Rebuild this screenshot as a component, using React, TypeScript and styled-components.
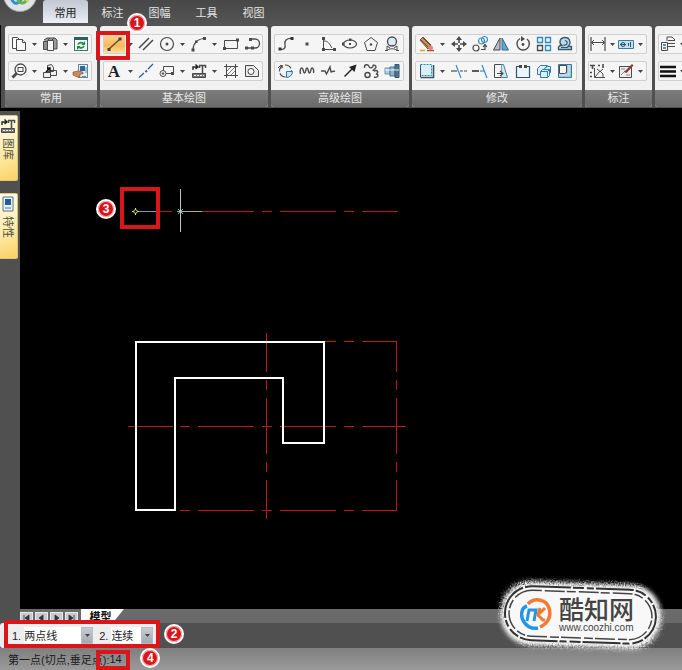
import React from "react";
import styled, { createGlobalStyle } from "styled-components";

const GlobalStyle = createGlobalStyle`
  * { box-sizing: border-box; }
  html, body, #root { height: 100%; margin: 0; }
  body { background: #505050; overflow: hidden; }
  body, button, input, select {
    font-family: "Liberation Sans", "Noto Sans CJK SC", sans-serif;
    font-size: 11px;
  }
  button { padding: 0; border: 0; background: none; color: inherit; }
`;

const Page = styled.div`
  position: relative;
  display: flex;
  flex-direction: column;
  min-height: 100vh;
  background: #505050;
`;

/* ---------- header ---------- */

const Header = styled.header`
  display: flex;
  align-items: flex-start;
  height: 25px;
  padding-left: 3px;
  background: linear-gradient(#474747, #555555);
`;

const AppButton = styled.button`
  width: 34px;
  height: 12px;
  margin-right: 6px;
  overflow: hidden;
  svg { display: block; margin-top: -22px; }
`;

const Tabs = styled.nav`
  display: flex;
  gap: 2px;
`;

const Tab = styled.button<{ $active?: boolean }>`
  width: 45px;
  height: 23px;
  border-radius: 3px 3px 0 0;
  color: ${(p) => (p.$active ? "#222222" : "#e4e4e4")};
  background: ${(p) =>
    p.$active ? "linear-gradient(#c3c8d2, #d9dde6 60%, #eef0f5)" : "none"};
`;

/* ---------- ribbon ---------- */

const Ribbon = styled.div`
  display: flex;
  gap: 3px;
  height: 84px;
  padding: 1px 0 1px 4px;
  border-left: 1px solid #0a0a0a;
  border-bottom: 1px solid #000000;
  background: #505050;
  overflow: hidden;
`;

const Group = styled.section<{ $width?: number }>`
  position: relative;
  display: flex;
  flex-direction: column;
  flex: ${(p) => (p.$width ? `0 0 ${p.$width}px` : "1 0 67px")};
  border-radius: 3px;
  background: #f1f1f1;
`;

const GroupBody = styled.div`
  display: flex;
  flex: 1;
  flex-direction: column;
  gap: 7px;
  padding: 8px 5px 0 3px;
`;

const ToolRow = styled.div`
  display: flex;
  align-items: center;
  height: 20px;
  border: 1px solid #cfcfcf;
  border-radius: 2px;
  background: #f5f5f5;
`;

const ToolButton = styled.button<{ $active?: boolean }>`
  display: flex;
  flex: 1 1 21px;
  align-items: center;
  justify-content: center;
  min-width: 0;
  height: 18px;
  background: ${(p) =>
    p.$active ? "linear-gradient(#fbd49a, #f9b858 60%, #fde3a0)" : "none"};
  svg { flex: none; overflow: visible; }
`;

const CaretButton = styled.button`
  display: flex;
  flex: 0 0 11px;
  align-items: center;
  justify-content: center;
  height: 18px;
`;

const GroupLabel = styled.h2`
  height: 17px;
  margin: 0;
  border-radius: 0 0 3px 3px;
  background: linear-gradient(#7d7d7d, #6a6a6a);
  color: #e9e9e9;
  font-size: 11px;
  font-weight: 400;
  line-height: 17px;
  text-align: center;
`;

/* ---------- workspace ---------- */

const Workspace = styled.div`
  display: flex;
  flex: 1;
  background: #000000;
`;

const Sidebar = styled.aside`
  display: flex;
  flex: 0 0 20px;
  flex-direction: column;
  gap: 12px;
  align-items: flex-start;
  padding-top: 4px;
  border-top: 2px solid #000000;
  background: #505050;
`;

const SideTab = styled.button`
  display: flex;
  flex-direction: column;
  align-items: center;
  gap: 4px;
  width: 18px;
  height: 66px;
  padding: 2px 2px 0 0;
  border: 1px solid #e0c57a;
  border-left: 0;
  border-radius: 0 2px 2px 0;
  background: linear-gradient(160deg, #fffbea, #fdeeb4 50%, #fbd262);
  color: #54503f;
`;

const SideLabel = styled.span`
  writing-mode: vertical-rl;
  text-orientation: sideways;
  line-height: 14px;
`;

const Drawing = styled.main`
  position: relative;
  display: flex;
  flex: 1;
  min-width: 0;
  svg.plan { width: 100%; height: auto; min-height: 420px; }
`;

/* ---------- bottom bars ---------- */

const SheetBar = styled.div`
  display: flex;
  gap: 3px;
  height: 14px;
  padding-left: 20px;
  background: linear-gradient(90deg, #505050 20px, #6a6a6a 20px);
  overflow: hidden;
`;

const SheetNav = styled.div`
  display: flex;
  gap: 2px;
  padding-top: 3px;
`;

const NavButton = styled.button`
  display: flex;
  align-items: center;
  justify-content: center;
  width: 13px;
  height: 12px;
  background: #c9c9c9;
  border: 1px solid #e9e9e9;
`;

const SheetTab = styled.button`
  width: 43px;
  height: 17px;
  padding-right: 4px;
  background: #ffffff;
  clip-path: polygon(0 0, 100% 0, 68% 100%, 0 100%);
  color: #111111;
  font-weight: 700;
  line-height: 15px;
`;

const OptionBar = styled.div`
  display: flex;
  height: 25px;
  background: #505050;
`;

const Options = styled.div`
  position: relative;
  display: flex;
  align-items: center;
  gap: 6px;
  width: 160px;
  padding-left: 12px;
  border-radius: 3px;
  background: #eeeeee;
`;

const Option = styled.label`
  position: relative;
  display: flex;
  align-items: center;
  gap: 3px;
  color: #222222;
`;

const Choice = styled.select<{ $width: number }>`
  width: ${(p) => p.$width}px;
  height: 17px;
  padding: 0;
  border: 0;
  appearance: none;
  background: #ffffff;
  color: #222222;
`;

const ChoiceArrow = styled.span`
  position: absolute;
  right: 0;
  display: flex;
  align-items: center;
  justify-content: center;
  width: 12px;
  height: 17px;
  border: 1px solid #b8bcc4;
  background: linear-gradient(#c9ccd3, #a3a7b0);
  pointer-events: none;
`;

const StatusBar = styled.footer`
  height: 22px;
  padding-left: 8px;
  background: linear-gradient(#7f7f7f, #9a9a9a);
`;

const Prompt = styled.label`
  display: flex;
  align-items: center;
  height: 22px;
  color: #1b1b1b;
`;

const PromptField = styled.span`
  position: relative;
  display: flex;
`;

const PromptInput = styled.input`
  width: 24px;
  padding: 0;
  border: 0;
  background: none;
  color: #1b1b1b;
`;

/* ---------- annotations lying over the window ---------- */

const Highlight = styled.span<{ $x: number; $y: number; $w: number; $h: number }>`
  position: absolute;
  z-index: 2;
  left: ${(p) => p.$x}px;
  top: ${(p) => p.$y}px;
  width: ${(p) => p.$w}px;
  height: ${(p) => p.$h}px;
  border: 4px solid #d9161b;
  pointer-events: none;
`;

const Step = styled.span<{ $x: number; $y: number }>`
  position: absolute;
  z-index: 3;
  left: ${(p) => p.$x}px;
  top: ${(p) => p.$y}px;
  width: 20px;
  height: 20px;
  border: 2px solid #ffffff;
  border-radius: 50%;
  background: #d9161b;
  box-shadow: inset 0 0 0 1px #f3b5b5;
  color: #ffffff;
  font-size: 12px;
  font-weight: 700;
  line-height: 16px;
  text-align: center;
`;

const Watermark = styled.div`
  position: absolute;
  right: 10px;
  bottom: 12px;
  z-index: 4;
  display: flex;
  align-items: center;
  gap: 6px;
  width: 180px;
  height: 84px;
  padding: 0 0 4px 28px;
`;

const WatermarkShape = styled.svg`
  position: absolute;
  inset: 0;
`;

const Brand = styled.div`
  position: relative;
  display: flex;
  flex-direction: column;
  color: #444444;
`;

const BrandName = styled.strong`
  font-family: "Noto Sans CJK SC", sans-serif;
  font-size: 25px;
  font-weight: 500;
  line-height: 28px;
`;

const BrandSite = styled.span`
  font-size: 10px;
  line-height: 12px;
`;

const BrandLogo = styled.svg`
  position: relative;
  flex: none;
`;

/* ---------- icons ---------- */

const D = "#4a4a4a";
const B = "#3b8fc4";
const L = "#cfe6f3";

const icons: Record<string, React.ReactNode> = {
  copy: (
    <g stroke={D} fill="#fafafa">
      <path d="M1.5 1.5h5l2 2v9h-7z" />
      <path d="M5.5 3.5h6l3 3v8h-9z" />
      <path d="M11.5 3.5v3h3" />
    </g>
  ),
  layers: (
    <g stroke={D}>
      <path d="M2 4l3-2h8l2 2v9h-3" fill="#9a9a9a" />
      <path d="M6 4l2-2M9 5l3-3" fill="none" />
      <path d="M1.5 5.500h4v8h-4z" fill="#8d8d8d" />
      <path d="M5.500 4.500h6v10h-6z" fill="#f6f6f6" />
    </g>
  ),
  refresh: (
    <g>
      <rect x="1.500" y="1.500" width="13" height="13" fill="#f3faf4" stroke="#47705d" />
      <path d="M1 1h14v3H1z" fill="#2c6058" />
      <path d="M5 8.500c1-2.500 4.500-2.500 5.500-.5M11 10c-1 2.500-4.500 2.500-5.500.5" fill="none" stroke="#198c45" strokeWidth="1.700" />
      <path d="M12 5v4H8.500zM4 14v-4h3.500z" fill="#198c45" />
    </g>
  ),
  zoom: (
    <g fill="none" stroke={D}>
      <path d="M6 10l-4.500 4.500" strokeWidth="2.800" />
      <circle cx="9.500" cy="6.500" r="5.500" fill="#f8f8f8" strokeWidth="1.300" />
      <rect x="7" y="4.500" width="5" height="4" />
    </g>
  ),
  block: (
    <g stroke={D} fill="#eeeeee">
      <path d="M5.500 2.500l4-1 2 3v4h-6zM8.500 7.500h6v5h-6zM1.500 9.500h7v5h-7z" />
      <path d="M4 9L8 5M5 5h3v3" fill="none" stroke="#111111" strokeWidth="1.500" />
    </g>
  ),
  props: (
    <g>
      <rect x="5.500" y="1.500" width="9" height="13" fill="#e8f1f8" stroke="#6686a0" />
      <path d="M7 3h5v5H7z" fill="#2b68a0" />
      <path d="M9 13.500h4M13 4v6" stroke="#6686a0" />
      <path d="M0 9l5-1 5 1v2H7v3H4L0 12z" fill="#c98b5b" stroke="#7b4b28" strokeWidth=".6" />
    </g>
  ),
  line: (
    <g>
      <path d="M3 13L14 3" stroke="#5b4a30" strokeWidth="1.300" />
      <path d="M1.500 12h3v3h-3zM12.500 1.500h3v3h-3z" fill="#4b4234" />
    </g>
  ),
  parallel: <path d="M1 12L11 2M5 14L15 4" stroke={D} strokeWidth="1.500" />,
  circle: (
    <g>
      <circle cx="8" cy="8" r="6.500" fill="none" stroke={D} strokeWidth="1.200" />
      <circle cx="8" cy="8" r="1.500" fill={D} />
    </g>
  ),
  arc: (
    <g>
      <path d="M2 14C2 8 6 3 13 2.500" fill="none" stroke={D} strokeWidth="1.200" />
      <path d="M.5 12.500h3v3h-3zM12 1h3v3h-3zM4 4.500h2.500V7H4z" fill={D} />
    </g>
  ),
  rect: (
    <g>
      <path d="M1.500 4.500h13v8h-13z" fill="none" stroke={D} />
      <path d="M0 11h3v3H0zM13 2.500h3v3h-3z" fill={D} />
    </g>
  ),
  polyline: (
    <g>
      <path d="M7 3h4a4.500 4.500 0 010 9H3" fill="none" stroke={D} strokeWidth="1.300" />
      <path d="M5 2h3v3H5zM1 10.500h3v3H1zM7 10.500h3v3H7z" fill={D} />
    </g>
  ),
  text: (
    <text x="8" y="14" textAnchor="middle" fontFamily="Liberation Serif, serif" fontSize="17" fontWeight="700" fill="#222222">
      A
    </text>
  ),
  center: (
    <g fill="none" stroke="#355f91" strokeWidth="1.300">
      <path d="M1 14.500l5-4.500M10 6l5-5" />
      <path d="M7.500 9L9 7.500" strokeWidth="2" />
    </g>
  ),
  slot: (
    <g fill="#f6f6f6" stroke={D}>
      <path d="M4.500 3.500h10v7h-10z" />
      <circle cx="4" cy="10.500" r="3" />
      <circle cx="4" cy="10.500" r=".8" fill={D} />
      <path d="M12 9h3v3h-3z" fill={D} stroke="none" />
    </g>
  ),
  library: (
    <g>
      <path d="M2 7V4h4M4.500 1.500L7 4 4.500 6" fill="none" stroke="#222222" strokeWidth="1.400" />
      <path d="M8 2.500h7M8.500 2v3M14.500 2v3M11.500 3v7" stroke={D} strokeWidth="1.500" />
      <path d="M1.500 10.500h13v4h-13z" fill="#777777" stroke={D} />
      <path d="M3 12.500h10" stroke="#eeeeee" strokeDasharray="2 1" />
    </g>
  ),
  hatch: (
    <g fill="none" stroke={D}>
      <path d="M3.500 1v14M12.500 1v14M1 3.500h14M1 12.500h14" />
      <path d="M4 8l4-4M4 12l8-8M8 12l4-4" strokeWidth=".7" />
    </g>
  ),
  region: (
    <g fill="#eaeaea" stroke={D}>
      <path d="M1.500 2.500h8l5 5v6h-13z" />
      <circle cx="7" cy="8.500" r="3" fill="#ffffff" />
    </g>
  ),
  spline: (
    <g>
      <path d="M2 13C7 14.500 7.500 11 7 8S8 2 14 2.500" fill="none" stroke={D} strokeWidth="1.300" />
      <path d="M.5 11.500h3v3h-3zM12.500 1h3v3h-3z" fill="#333333" />
    </g>
  ),
  point: <path d="M6.500 6.500h3v3h-3z" fill={D} />,
  formula: (
    <g>
      <path d="M3.500 2v11.500H14M4 5c4 0 5 2 8 7" fill="none" stroke={D} />
      <path d="M2 1h3v3H2zM2 12h3v3H2zM13 12h3v3h-3z" fill={D} />
    </g>
  ),
  ellipse: (
    <g>
      <ellipse cx="8" cy="8" rx="6.500" ry="4" fill="none" stroke={D} strokeWidth="1.200" />
      <path d="M7 7h2v2H7zM0 6.500h2.500v3H0zM7 2.500h2.500V5H7z" fill={D} />
    </g>
  ),
  polygon: (
    <g>
      <path d="M8 1.500l6.500 5-2.500 8H4l-2.500-8z" fill="none" stroke={D} />
      <circle cx="8" cy="8.500" r="1.200" fill={D} />
    </g>
  ),
  profile: (
    <g stroke={D}>
      <circle cx="8" cy="5.500" r="4.500" fill="#d8edf6" strokeWidth="1.300" />
      <path d="M3 15v-5l3 2M13 15v-5l-3 2M3 15c1-3 9-3 10 0" fill="none" />
      <path d="M1 14.500h3M12 14.500h3" />
    </g>
  ),
  partial: (
    <g>
      <circle cx="7.500" cy="8" r="6" fill="none" stroke={D} strokeDasharray="7 2" strokeWidth="1.200" />
      <path d="M8.500 8.500h6a6 6 0 01-6 6z" fill={L} stroke="#2b79a5" />
      <path d="M0 5l3-3 2 3M3 2v4" fill="none" stroke={D} />
    </g>
  ),
  wave: (
    <path d="M1.500 11c-1-3 0-6 1.500-6s1 5 2.500 5S6.500 5 8 5s1 5 2.500 5S11.500 5 13 5s2 3 1.500 5" fill="none" stroke={D} strokeWidth="1.400" />
  ),
  zigzag: <path d="M1 8h4l1.500 3L10 4l1 5 4-1" fill="none" stroke={D} strokeWidth="1.400" />,
  arrow: (
    <g>
      <path d="M2.500 13.500L11 5" stroke="#222222" strokeWidth="1.500" />
      <path d="M14.500 1.500L12.500 9 7 4z" fill="#222222" />
    </g>
  ),
  contour: (
    <g fill="none" stroke={D} strokeWidth="1.400">
      <path d="M1.500 5C1 1 5 1 6 3.500s4 1 4-.5 3-1 3 1-3 2-3 4M11 8c4-1.500 5 2 2 3 3.500 0 2 4.500-2 3" />
      <circle cx="4.500" cy="12" r="2.500" />
    </g>
  ),
  shaft: (
    <g>
      <path d="M1 5h5v6H1z" fill="#b5cfdf" stroke="#6b93ae" />
      <path d="M6 4h5v9H6z" fill="#8fb2c9" stroke="#45799c" />
      <path d="M11 1.500h4v13h-4z" fill="#4c7494" stroke="#34546e" />
      <path d="M1 7h14" stroke="#f0f6fa" />
    </g>
  ),
  erase: (
    <g>
      <path d="M1 4l3-3 8 8-3 4z" fill="#c8925a" stroke="#7b5230" />
      <path d="M4 2l7 7M2 4l7 7" stroke="#573928" strokeWidth=".8" />
      <path d="M9 12l3-3 2 2c1 2-2 4-4 2z" fill="#e8867c" />
      <path d="M1 14.500h5" stroke="#d4a820" strokeWidth="1.500" />
      <path d="M8 14.500h7" stroke="#bb423d" strokeWidth="1.500" />
    </g>
  ),
  move: (
    <g>
      <path d="M8 3v10M3 8h10" stroke={D} strokeDasharray="4 2" strokeWidth="1.600" />
      <path d="M8 0l3 4H5zM8 16l3-4H5zM0 8l4-3v6zM16 8l-4-3v6z" fill={D} />
    </g>
  ),
  duplicate: (
    <g fill="none" strokeWidth="1.200">
      <circle cx="9.500" cy="5" r="3" stroke={B} />
      <circle cx="12.500" cy="3.500" r="3" stroke={B} />
      <circle cx="4" cy="12" r="3" stroke={D} />
      <path d="M9 13.500h4V9M11 11l2-2.500 2 2.500" stroke={D} />
    </g>
  ),
  mirror: (
    <g>
      <path d="M7 2v12H.5z" fill="#b5bec6" stroke={D} />
      <path d="M9 2v12h6.500z" fill="#60a7ce" stroke="#2a6d99" />
    </g>
  ),
  rotate: (
    <g>
      <path d="M5 2.500a6.200 6.200 0 107 .5" fill="none" stroke={D} strokeWidth="1.400" />
      <path d="M6 0l4 3-4 2.500z" fill={D} />
      <circle cx="8" cy="8.500" r="1.400" fill={D} />
    </g>
  ),
  array: (
    <g fill="#e9f5fb" stroke="#2f88bb" strokeWidth="1.300">
      <path d="M1.500 1.500h5v5h-5zM9.500 1.500h5v5h-5zM9.500 9.500h5v5h-5z" />
      <path d="M1.500 9.500h5v5h-5z" stroke={D} />
    </g>
  ),
  offset: (
    <g fill="none">
      <path d="M1.500 13.500h13v-3h-4c4-2 3-9-2.500-9S1.500 7 5 9.500H3L1.500 11z" fill="#b7dcec" stroke="#3a5668" strokeWidth="1.300" />
      <path d="M4 11.500h7M6.500 9c4 1 5-4 1.500-4.500" stroke="#3a5668" strokeWidth="1.200" />
    </g>
  ),
  stretch: (
    <g>
      <path d="M1.500 1.500h11v11h-11z" fill="#d9eef8" stroke="#2f88bb" strokeDasharray="2 1" />
      <path d="M1.500 14.500h13V2" fill="none" stroke="#35566d" strokeWidth="1.600" />
      <path d="M1.500 2v12" stroke="#35566d" />
    </g>
  ),
  trim: (
    <g strokeWidth="1.200">
      <path d="M5 2l5 13" stroke={B} />
      <path d="M0 8h6" stroke={D} />
      <path d="M9 8h7" stroke={D} strokeDasharray="3 1" />
    </g>
  ),
  extend: (
    <g strokeWidth="1.200">
      <path d="M10 2l5 13" stroke={B} />
      <path d="M0 8h7" stroke={D} strokeWidth="1.800" />
      <path d="M8 8h4" stroke={B} />
    </g>
  ),
  scale: (
    <g>
      <path d="M1.500 1.500h7v13h-7z" fill="#f4f4f4" stroke={D} />
      <path d="M8.500 1.500h2l4 13h-6" fill={L} stroke="#2f88bb" />
      <path d="M4 10.500h5M7 8l3 2.500L7 13" fill="none" stroke={D} strokeWidth="1.200" />
    </g>
  ),
  break: (
    <g fill="none">
      <path d="M4 3.500H1.500v11h13v-11H12" fill="#edf6fb" stroke="#2c5777" strokeWidth="1.200" />
      <path d="M4 2h3v3H4zM9 2h3v3H9z" fill={D} />
    </g>
  ),
  explode: (
    <g fill="#dceef7" stroke="#2f7fae">
      <path d="M1.500 5.500l3-3h7l-3 3v6h-7z" />
      <path d="M8.500 5.500l3-2h3v6l-3 2" />
      <path d="M4.500 8.500l2-2h7v6l-2 2h-7zM4.500 8.500h7v6M11.500 8.500l2-2" />
    </g>
  ),
  chamfer: (
    <g>
      <path d="M1.500 1.500h13v13h-13z" fill="#9cc8df" stroke="#3e7999" />
      <path d="M2.500 2.500h7v7l-2 1h-5z" fill="#f5f5f5" stroke={D} />
      <path d="M12 2v10H2" fill="none" stroke="#d9edf6" />
    </g>
  ),
  dimension: (
    <g fill="none" stroke={D}>
      <path d="M1 1v14M15 1v14M1 6.500h14" strokeWidth="1.200" />
      <path d="M4 4L1.500 6.500 4 9M12 4l2.500 2.500L12 9" />
    </g>
  ),
  tolerance: (
    <g>
      <path d="M.5 4.500h15v8H.5z" fill="#c5dfec" stroke="#3c7ca0" />
      <circle cx="5" cy="8.500" r="2" fill="none" stroke="#28546f" />
      <path d="M2 8.500h6M10.500 10V7M12.500 6v5" stroke="#28546f" />
    </g>
  ),
  coordinate: (
    <g fill="none" stroke={D}>
      <path d="M4.500 5v9.500H15M5 14l5-6 3 3V15M7 6l3 2.500L13 6" />
      <path d="M0 2.500h5M2.500 2v4M8 2.500h2M13 1v4M0 9.500h2M0 13.500h2" strokeWidth="1.600" />
    </g>
  ),
  annotate: (
    <g>
      <path d="M1.500 3.500h12v11h-12z" fill="#eeeeee" stroke={D} />
      <path d="M3 12l4-4M3 6h4M8 12h4" stroke="#888888" />
      <path d="M6 9l8-8 1.500 1.500-7 7.500z" fill="#843e39" />
    </g>
  ),
  layerset: (
    <g stroke={D} fill="#f5f5f5">
      <path d="M7 1h5l3 3M7 1v4M8 4.500h7M8 7.500h7M8 10.500h7" fill="none" />
      <path d="M1.500 6.500h6v8h-6z" />
      <path d="M3 9h3M3 12h3" stroke="#2f6d95" strokeWidth="1.500" />
    </g>
  ),
  lineweight: <path d="M0 4h16M0 8.500h16M0 13h16" stroke="#111111" strokeWidth="2.500" />,
};

const Icon = ({ name }: { name: string }) => (
  <svg width="16" height="16" viewBox="0 0 16 16" fill="none" aria-hidden="true">
    {icons[name]}
  </svg>
);

const Caret = () => (
  <svg width="5" height="3" viewBox="0 0 5 3" aria-hidden="true">
    <path d="M0 0h5L2.500 3z" fill="#444444" />
  </svg>
);

/* "v" marks a drop-down arrow after the preceding tool. */
const groups: { label: string; width?: number; rows: string[][] }[] = [
  { label: "常用", width: 92, rows: [["copy", "v", "layers", "v", "refresh"], ["zoom", "v", "block", "v", "props"]] },
  {
    label: "基本绘图",
    width: 168,
    rows: [
      ["line", "v", "parallel", "circle", "v", "arc", "v", "rect", "polyline"],
      ["text", "v", "center", "slot", "v", "library", "v", "hatch", "region"],
    ],
  },
  {
    label: "高级绘图",
    width: 138,
    rows: [
      ["spline", "point", "formula", "ellipse", "polygon", "profile"],
      ["partial", "wave", "zigzag", "arrow", "contour", "shaft"],
    ],
  },
  {
    label: "修改",
    width: 170,
    rows: [
      ["erase", "v", "move", "duplicate", "mirror", "rotate", "array", "offset"],
      ["stretch", "v", "trim", "extend", "scale", "break", "explode", "chamfer"],
    ],
  },
  { label: "标注", width: 67, rows: [["dimension", "v", "tolerance", "v"], ["coordinate", "v", "annotate", "v"]] },
  { label: "", rows: [["layerset", "v", "rect", "v"], ["lineweight", "v", "rect", "v"]] },
];

const tabs = ["常用", "标注", "图幅", "工具", "视图"];

const navPaths = [
  "M2 1v6M7 1v6L3 4z",
  "M6 1v6L2 4z",
  "M3 1v6l4-3z",
  "M7 1v6M2 1v6l4-3z",
];

const Plan = () => (
  <svg className="plan" aria-label="模型">
    <g transform="translate(-20 -109)" fill="none">
      <g stroke="#bd161d" strokeWidth="1">
        <path d="M158 211.500h14M201 211.500h53M262 211.500h10M280 211.500h56M344 211.500h10M362 211.500h36" />
        <path d="M324 341.500h12M344 341.500h10M362 341.500h35" />
        <path d="M128 426.500h45M180 426.500h10M198 426.500h56M262 426.500h10M280 426.500h56M344 426.500h10M362 426.500h44" />
        <path d="M180 510.500h10M198 510.500h56M262 510.500h10M280 510.500h56M344 510.500h10M362 510.500h35" />
        <path d="M266.500 333v39M266.500 380v10M266.500 398v56M266.500 462v10M266.500 480v39" />
        <path d="M396.500 341v31M396.500 380v10M396.500 398v56M396.500 462v10M396.500 480v31" />
      </g>
      <path d="M136 342H324V443H283V378H175V510H136Z" stroke="#ffffff" strokeWidth="2" />
      <path d="M138 211.500h18" stroke="#6f9fb8" />
      <path d="M180.500 189v43" stroke="#c4c4bc" strokeWidth="1" />
      <path d="M177 211.500h25M178 209l5 5M183 209l-5 5" stroke="#86bcae" />
      <path d="M135.500 208v7M132 211.500h7" stroke="#e9e05c" />
      <circle cx="135.500" cy="211.500" r="1.800" fill="#000000" stroke="#e9e05c" />
    </g>
  </svg>
);

export default function App() {
  return (
    <Page>
      <GlobalStyle />
      <Header>
        <AppButton aria-label="菜单">
          <svg width="34" height="34" viewBox="0 0 34 34">
            <circle cx="17" cy="17" r="16.500" fill="#dfe3e6" stroke="#9ba0a5" />
            <path d="M8 18c1 6 4 9 8 6l5-6" fill="none" stroke="#2f8fd0" strokeWidth="3" />
            <path d="M14 20c3 7 8 7 12-2" fill="none" stroke="#62b54c" strokeWidth="3" />
            <path d="M21 19l4 5" stroke="#e5cf3a" strokeWidth="2" />
          </svg>
        </AppButton>
        <Tabs>
          {tabs.map((t, i) => (
            <Tab key={t} $active={i === 0}>{t}</Tab>
          ))}
        </Tabs>
      </Header>

      <Ribbon>
        {groups.map((g, gi) => (
          <Group key={gi} $width={g.width}>
            <GroupBody>
              {g.rows.map((row, ri) => (
                <ToolRow key={ri}>
                  {row.map((name, i) =>
                    name === "v" ? (
                      <CaretButton key={i} aria-label={`${row[i - 1]} options`}><Caret /></CaretButton>
                    ) : (
                      <ToolButton key={i} aria-label={name} $active={name === "line"}>
                        <Icon name={name} />
                      </ToolButton>
                    )
                  )}
                </ToolRow>
              ))}
            </GroupBody>
            <GroupLabel>{g.label}</GroupLabel>
          </Group>
        ))}
      </Ribbon>
      <Highlight $x={96} $y={31} $w={34} $h={29} />
      <Step $x={127} $y={13}>1</Step>

      <Workspace>
        <Sidebar>
          <SideTab><Icon name="library" /><SideLabel>图库</SideLabel></SideTab>
          <SideTab>
            <svg width="12" height="16" viewBox="0 0 12 16" aria-hidden="true">
              <path d="M1 1h10v14H1z" fill="#e9f1f6" stroke="#55748c" />
              <path d="M3 3h6v6H3z" fill="#245c98" />
              <path d="M3 12h6" stroke="#55748c" />
            </svg>
            <SideLabel>特性</SideLabel>
          </SideTab>
        </Sidebar>
        <Drawing>
          <Plan />
          <Highlight $x={100} $y={78} $w={40} $h={42} />
          <Step $x={76} $y={90}>3</Step>
        </Drawing>
      </Workspace>

      <SheetBar>
        <SheetNav>
          {navPaths.map((d) => (
            <NavButton key={d} aria-label="sheet">
              <svg width="9" height="8" viewBox="0 0 9 8"><path d={d} fill="#333333" stroke="#333333" strokeWidth=".8" /></svg>
            </NavButton>
          ))}
        </SheetNav>
        <SheetTab>模型</SheetTab>
      </SheetBar>

      <OptionBar>
        <Options>
          <Option>
            1.
            <Choice $width={69}><option>两点线</option></Choice>
            <ChoiceArrow><Caret /></ChoiceArrow>
          </Option>
          <Option>
            2.
            <Choice $width={42}><option>连续</option></Choice>
            <ChoiceArrow><Caret /></ChoiceArrow>
          </Option>
          <Highlight $x={4} $y={-3} $w={156} $h={28} />
          <Step $x={164} $y={1}>2</Step>
        </Options>
      </OptionBar>

      <StatusBar>
        <Prompt>
          第一点(切点,垂足点):
          <PromptField>
            <PromptInput defaultValue="14" />
            <Highlight $x={-13} $y={-3} $w={34} $h={20} />
            <Step $x={31} $y={-5}>4</Step>
          </PromptField>
        </Prompt>
      </StatusBar>

      <Watermark>
        <WatermarkShape width="180" height="84" viewBox="0 0 180 84" aria-hidden="true">
          <defs>
            <filter id="spray" x="-10%" y="-20%" width="120%" height="140%">
              <feTurbulence type="fractalNoise" baseFrequency=".8" numOctaves="2" seed="3" result="grain" />
              <feGaussianBlur in="SourceGraphic" stdDeviation="2" result="soft" />
              <feDisplacementMap in="soft" in2="grain" scale="9" />
            </filter>
          </defs>
          <g transform="rotate(2 90 40)">
            <rect x="9" y="9" width="160" height="64" rx="30" fill="#f8f8f8" filter="url(#spray)" />
            <rect x="13" y="14" width="151" height="54" rx="27" fill="none" stroke="#333333" strokeWidth="2" strokeDasharray="38 2 11 3 7 2" />
            <rect x="17" y="18" width="143" height="46" rx="23" fill="#f8f8f8" stroke="#444444" strokeWidth="1.500" strokeDasharray="9 3 20 2" />
          </g>
        </WatermarkShape>
        <BrandLogo width="33" height="34" viewBox="0 0 33 34" aria-hidden="true">
          <g fill="none" strokeWidth="3">
            <path d="M7 9C1 11 0 19 4 25s9 7 14 6" stroke="#2196e8" strokeWidth="3.500" />
            <path d="M8 7c6-7 18-5 21 4s-2 16-9 19" stroke="#f47a31" strokeWidth="3.500" />
            <path d="M7 24l2-11h7l-2 11" stroke="#2196e8" />
            <path d="M20 11l-2 7 5 5h2M25 11l-7 7" stroke="#f47a31" />
          </g>
        </BrandLogo>
        <Brand>
          <BrandName>酷知网</BrandName>
          <BrandSite>www.coozhi.com</BrandSite>
        </Brand>
      </Watermark>
    </Page>
  );
}
